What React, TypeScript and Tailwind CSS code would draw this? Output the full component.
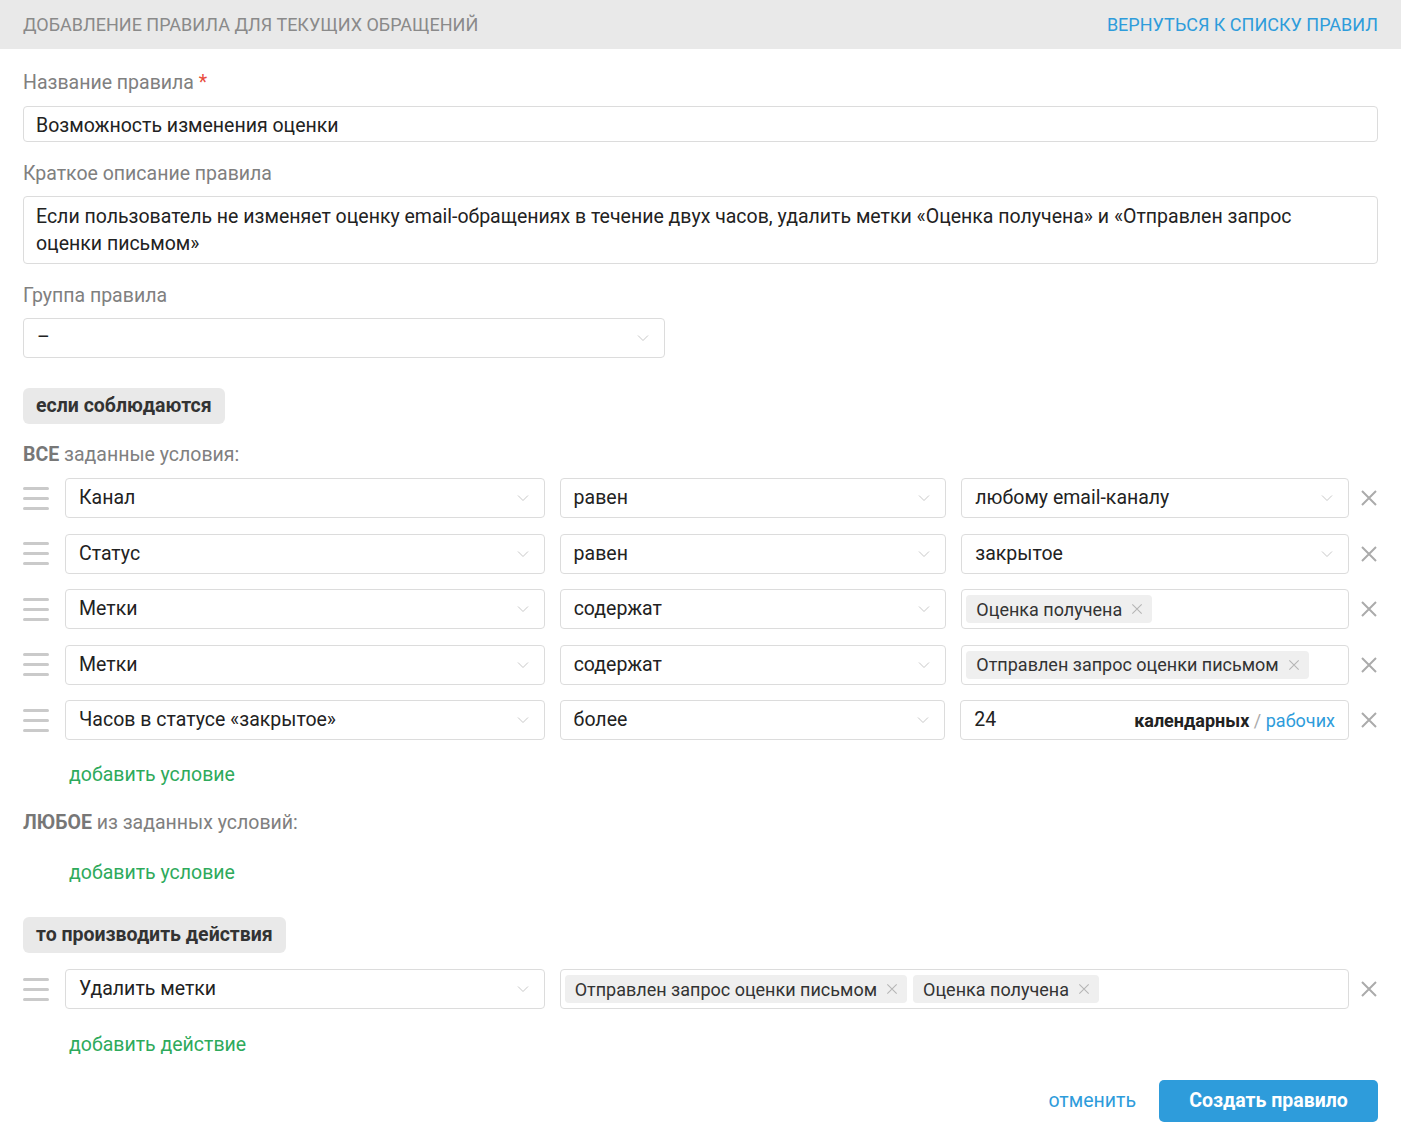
import type { ReactNode } from 'react';

const Chevron = () => (
  <svg width="12" height="8" viewBox="0 0 12 8" className="shrink-0">
    <path d="M1 1.5 L6 6.5 L11 1.5" fill="none" stroke="#c8c8c8" strokeWidth="1" />
  </svg>
);

const Cross = ({ size = 18, color = '#ababab', width = 2 }: { size?: number; color?: string; width?: number }) => (
  <svg width={size} height={size} viewBox="0 0 18 18" className="shrink-0">
    <path d="M2 2 L16 16 M16 2 L2 16" fill="none" stroke={color} strokeWidth={width} />
  </svg>
);

const Handle = () => (
  <div className="flex w-[26px] shrink-0 flex-col gap-[7px]">
    <span className="h-[3px] w-full rounded-sm bg-[#cacaca]" />
    <span className="h-[3px] w-full rounded-sm bg-[#cacaca]" />
    <span className="h-[3px] w-full rounded-sm bg-[#cacaca]" />
  </div>
);

const Select = ({ value, className }: { value: string; className: string }) => (
  <div
    className={`flex h-[40px] items-center justify-between rounded-[4px] border border-[#dcdcdc] bg-white pl-[13px] pr-[15px] ${className}`}
  >
    <span className="text-[19.5px] text-[#222]">{value}</span>
    <Chevron />
  </div>
);

const Tag = ({ label }: { label: string }) => (
  <span className="flex h-[28px] items-center gap-[9px] rounded-[4px] bg-[#efefef] pl-[10px] pr-[9px] text-[18px] text-[#333]">
    {label}
    <Cross size={12} color="#b5b5b5" width={1.6} />
  </span>
);

const TagField = ({ tags, className }: { tags: string[]; className: string }) => (
  <div
    className={`flex h-[40px] items-center gap-[6px] rounded-[4px] border border-[#dcdcdc] bg-white px-[4px] ${className}`}
  >
    {tags.map((t) => (
      <Tag key={t} label={t} />
    ))}
  </div>
);

const Row = ({ children }: { children: ReactNode }) => (
  <div className="flex h-[40px] items-center">
    <Handle />
    {children}
    <div className="ml-[11px]">
      <Cross />
    </div>
  </div>
);

const Label = ({ children, className = '' }: { children: ReactNode; className?: string }) => (
  <div className={`h-[24px] text-[19.5px] leading-[24px] text-[#808080] ${className}`}>{children}</div>
);

const Badge = ({ children }: { children: ReactNode }) => (
  <div className="inline-flex h-[36px] items-center rounded-[6px] bg-[#e9e9e9] px-[13px] text-[19.5px] font-bold text-[#333]">
    {children}
  </div>
);

const AddLink = ({ children, className = '' }: { children: ReactNode; className?: string }) => (
  <div className={`h-[24px] pl-[46px] text-[19.5px] leading-[24px] text-[#2eaa5b] ${className}`}>{children}</div>
);

export default function App() {
  return (
    <div className="min-h-[1144px] bg-white font-['Roboto',sans-serif]">
      <header className="flex h-[49px] items-center justify-between bg-[#e9e9e9] px-[23px] text-[18px] uppercase">
        <span className="text-[#8a8a8a]">Добавление правила для текущих обращений</span>
        <a className="text-[#2e9cdb]">Вернуться к списку правил</a>
      </header>

      <main className="px-[23px] pt-[22px]">
        <Label>
          Название правила <span className="text-[#e84c3d]">*</span>
        </Label>
        <div className="mt-[11px] flex h-[36px] items-center rounded-[4px] border border-[#dcdcdc] px-[12px] pt-[4px] text-[19.5px] text-[#222]">
          Возможность изменения оценки
        </div>

        <Label className="mt-[20px]">Краткое описание правила</Label>
        <div className="mt-[10px] h-[68px] rounded-[4px] border border-[#dcdcdc] pl-[12px] pr-[40px] pt-[6px] text-[19.5px] leading-[27px] text-[#222]">
          Если пользователь не изменяет оценку email-обращениях в течение двух часов, удалить метки «Оценка получена» и
          «Отправлен запрос оценки письмом»
        </div>

        <Label className="mt-[20px]">Группа правила</Label>
        <Select value="–" className="mt-[10px] w-[642px]" />

        <div className="mt-[30px] h-[36px]">
          <Badge>если соблюдаются</Badge>
        </div>

        <Label className="mt-[19px]">
          <b className="font-bold text-[#777]">ВСЕ</b> заданные условия:
        </Label>

        <div className="mt-[11px] flex flex-col gap-[15.5px]">
          <Row>
            <Select value="Канал" className="ml-[16px] w-[480px]" />
            <Select value="равен" className="ml-[15px] w-[387px]" />
            <Select value="любому email-каналу" className="ml-[15px] w-[388px]" />
          </Row>
          <Row>
            <Select value="Статус" className="ml-[16px] w-[480px]" />
            <Select value="равен" className="ml-[15px] w-[387px]" />
            <Select value="закрытое" className="ml-[15px] w-[388px]" />
          </Row>
          <Row>
            <Select value="Метки" className="ml-[16px] w-[480px]" />
            <Select value="содержат" className="ml-[15px] w-[387px]" />
            <TagField tags={['Оценка получена']} className="ml-[15px] w-[388px]" />
          </Row>
          <Row>
            <Select value="Метки" className="ml-[16px] w-[480px]" />
            <Select value="содержат" className="ml-[15px] w-[387px]" />
            <TagField tags={['Отправлен запрос оценки письмом']} className="ml-[15px] w-[388px]" />
          </Row>
          <Row>
            <Select value="Часов в статусе «закрытое»" className="ml-[16px] w-[480px]" />
            <Select value="более" className="ml-[15px] w-[386px]" />
            <div className="ml-[15px] flex h-[40px] w-[389px] items-center justify-between rounded-[4px] border border-[#dcdcdc] pl-[13px] pr-[13px]">
              <span className="text-[19.5px] text-[#222]">24</span>
              <span className="text-[18px]">
                <b className="font-bold text-[#222]">календарных</b> <span className="text-[#aaa]">/</span>{' '}
                <span className="text-[#2e9cdb]">рабочих</span>
              </span>
            </div>
          </Row>
        </div>

        <AddLink className="mt-[23px]">добавить условие</AddLink>

        <Label className="mt-[24px]">
          <b className="font-bold text-[#777]">ЛЮБОЕ</b> из заданных условий:
        </Label>

        <AddLink className="mt-[26px]">добавить условие</AddLink>

        <div className="mt-[32px] h-[36px]">
          <Badge>то производить действия</Badge>
        </div>

        <div className="mt-[16px]">
          <Row>
            <Select value="Удалить метки" className="ml-[16px] w-[480px]" />
            <TagField
              tags={['Отправлен запрос оценки письмом', 'Оценка получена']}
              className="ml-[15px] w-[790px]"
            />
          </Row>
        </div>

        <AddLink className="mt-[24px]">добавить действие</AddLink>

        <div className="mt-[23px] flex items-center justify-end gap-[23px]">
          <a className="text-[19.5px] text-[#2e9cdb]">отменить</a>
          <button className="h-[42px] w-[219px] rounded-[5px] bg-[#2e9cdb] text-[19.5px] font-bold text-white">
            Создать правило
          </button>
        </div>
      </main>
    </div>
  );
}
